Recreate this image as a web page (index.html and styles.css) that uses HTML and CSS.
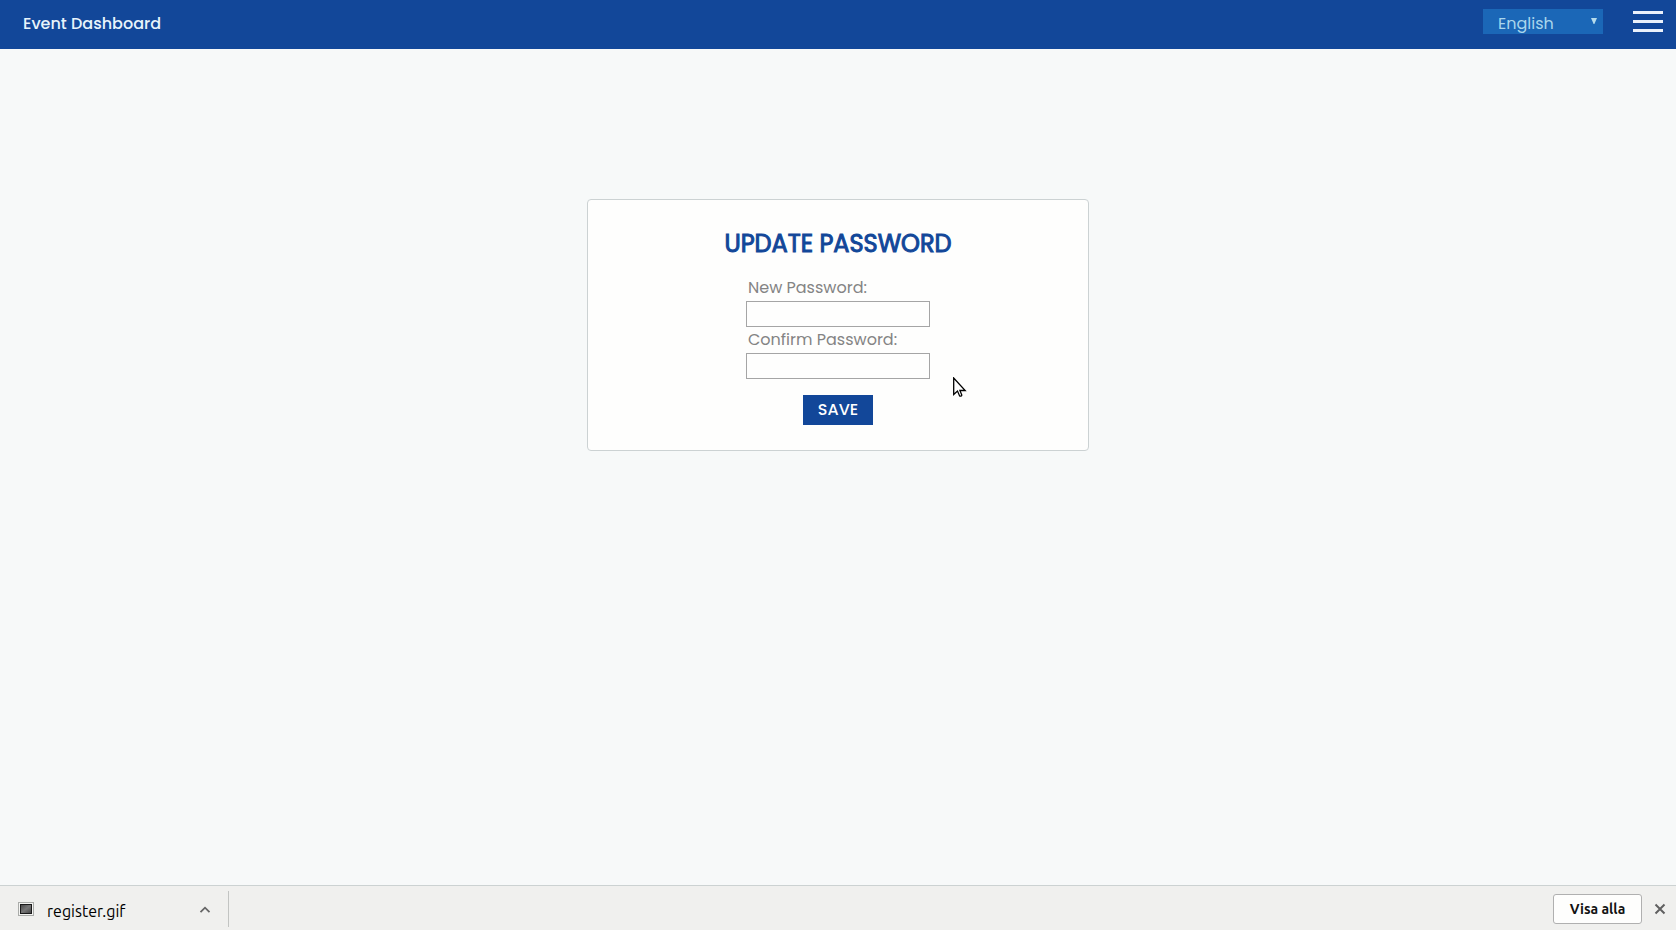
FILE: index.html
```html
<!DOCTYPE html>
<html lang="en">
<head>
<meta charset="utf-8">
<title>Event Dashboard</title>
<link rel="stylesheet" href="styles.css">
</head>
<body>
<header class="topbar">
  <a class="brand" href="#">Event Dashboard</a>
  <div class="language">
    <select class="language-select" aria-label="Language">
      <option>English</option>
      <option>Svenska</option>
    </select>
    <svg class="language-arrow" width="6" height="6" viewBox="0 0 6 6" aria-hidden="true"><path d="M0 0h6L3.400 6h-.8z" fill="#b5dcec"/></svg>
  </div>
  <button class="menu" type="button" aria-label="Menu">
    <span class="menu-bar"></span>
    <span class="menu-bar"></span>
    <span class="menu-bar"></span>
  </button>
</header>

<main class="content">
  <form class="card">
    <h1 class="card-title">UPDATE PASSWORD</h1>
    <div class="fields">
      <label class="label" for="new-password">New Password:</label>
      <input class="input" id="new-password" type="password">
      <label class="label" for="confirm-password">Confirm Password:</label>
      <input class="input" id="confirm-password" type="password">
    </div>
    <button class="save" type="button">SAVE</button>
    <svg class="pointer" width="14" height="21" viewBox="0 0 14 21" aria-hidden="true"><path d="M.7 1v16.600l3.800-3.500 2.100 4.800c.8.600 2 .2 2.200-.8l-1.900-4.600h5.300z" fill="#fff" stroke="#000" stroke-width="1.300"/></svg>
  </form>
</main>

<footer class="downloads">
  <div class="download">
    <svg class="file-icon" width="16" height="14" viewBox="0 0 16 14" aria-hidden="true">
      <defs><linearGradient id="shade" x1="0" y1="0" x2="1" y2="1"><stop offset="0" stop-color="#444"/><stop offset=".5" stop-color="#777"/><stop offset="1" stop-color="#444"/></linearGradient></defs>
      <rect x=".5" y=".5" width="15" height="13" fill="#f4f4f2" stroke="#aaaca9"/>
      <rect x="2.500" y="2.500" width="11" height="9" fill="url(#shade)" stroke="#1a1a1a"/>
    </svg>
    <span class="file-name">register.gif</span>
    <button class="icon-button" type="button" aria-label="Download options">
      <svg width="12" height="8" viewBox="0 0 12 8"><path d="M1.500 7.200 6 2.700l4.500 4.500" fill="none" stroke="#666" stroke-width="1.800"/></svg>
    </button>
  </div>
  <button class="show-all" type="button">Visa alla</button>
  <button class="icon-button" type="button" aria-label="Close">
    <svg width="12" height="12" viewBox="0 0 12 12"><path d="m1.500 1.500 9 9m0-9-9 9" fill="none" stroke="#606060" stroke-width="2"/></svg>
  </button>
</footer>
</body>
</html>
```
FILE: styles.css
```css
* {
  box-sizing: border-box;
}

body {
  margin: 0;
  min-height: 100vh;
  display: flex;
  flex-direction: column;
  background: #f7f9f9;
  font-family: Poppins, Inter, "Liberation Sans", sans-serif;
  font-size: 16px;
}

button,
select,
input {
  margin: 0;
  padding: 0;
  border: 0;
  border-radius: 0;
  background: none;
  font: inherit;
}

.topbar {
  display: flex;
  align-items: flex-start;
  padding: 9px 13px 11px 23px;
  background: #124799;
}

.brand {
  margin-right: auto;
  color: #e8f4fb;
  font-weight: 500;
  line-height: 29px;
  text-decoration: none;
}

.language {
  position: relative;
  margin-right: 30px;
}

.language-select {
  appearance: none;
  display: block;
  width: 120px;
  height: 25px;
  padding: 3px 20px 0 15px;
  background: #1b67b7;
  color: #a9d6ec;
  line-height: 24px;
}

.language-arrow {
  position: absolute;
  top: 9px;
  right: 6px;
  pointer-events: none;
}

.menu {
  display: flex;
  flex-direction: column;
  gap: 6px;
  padding-top: 2px;
}

.menu-bar {
  width: 30px;
  height: 3px;
  background: #eaf1fb;
}

.content {
  flex: 1;
  padding-top: 150px;
}

.card {
  position: relative;
  display: flex;
  flex-direction: column;
  align-items: center;
  width: 30%;
  min-width: 320px;
  margin: 0 auto;
  padding: 26px 24px 25px;
  border: 1px solid #ccd2d3;
  border-radius: 4px;
  background: #fefefd;
}

.card-title {
  margin: 0 0 13px;
  color: #124799;
  font-size: 24px;
  font-weight: 400;
  line-height: 36px;
  -webkit-text-stroke: 1px;
}

.fields {
  display: flex;
  flex-direction: column;
  width: 184px;
  margin-bottom: 16px;
}

.label {
  padding-left: 2px;
  color: #848484;
  line-height: 26px;
  white-space: nowrap;
}

.input {
  height: 26px;
  padding: 0 4px;
  border: 1px solid #a5a5a5;
  background: #fefefd;
}

.save {
  height: 30px;
  padding: 0 15px 2px;
  background: #124799;
  color: #fff;
  font-weight: 500;
}

.pointer {
  position: absolute;
  top: 177px;
  left: 365px;
}

.downloads {
  display: flex;
  align-items: center;
  height: 45px;
  padding: 2px 10px 0 18px;
  border-top: 1px solid #ccd2d2;
  background: #f0f0ee;
  font-family: Ubuntu, "Open Sans", "Noto Sans", sans-serif;
}

.download {
  display: flex;
  align-items: center;
  width: 211px;
  height: 36px;
  margin-right: auto;
  padding-right: 17px;
  border-right: 1px solid #c2c4c2;
}

.file-icon {
  margin-right: 13px;
}

.file-name {
  margin-right: auto;
  padding-top: 4px;
  color: #000;
}

.icon-button {
  display: flex;
}

.show-all {
  width: 89px;
  height: 30px;
  margin-right: 12px;
  border: 1px solid #b0b0b0;
  border-radius: 3px;
  background: #fefefd;
  color: #111;
  font-size: 14px;
  font-weight: 600;
}
```
